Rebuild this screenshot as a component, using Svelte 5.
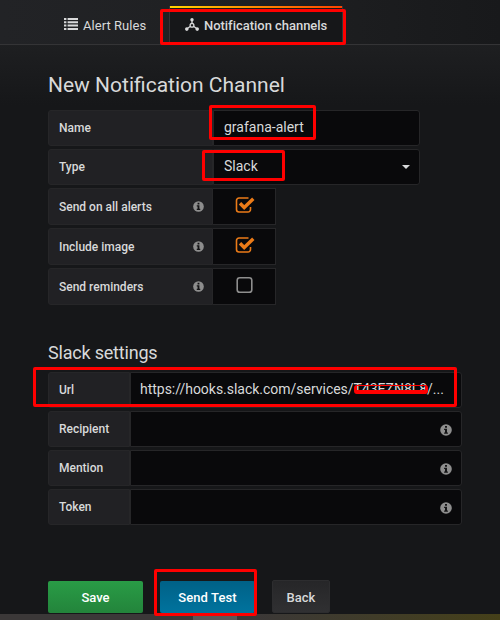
<script>
  const switches = [
    { label: 'Send on all alerts', on: true },
    { label: 'Include image', on: true },
    { label: 'Send reminders', on: false }
  ];
  const fields = ['Recipient', 'Mention', 'Token'];
</script>

{#snippet info()}
  <svg class="info" viewBox="0 0 12 12"><circle cx="6" cy="6" r="5.8" fill="currentColor" /><path d="M5 2h2v1.7H5zM4.1 4.7H7v3.7h.9v1.4H4.1V8.4H5V6.1h-.9z" fill="#141416" /></svg>
{/snippet}

<div class="page">
  <nav>
    <div class="tab first">
      <svg width="14" height="12" viewBox="0 0 14 12" fill="currentColor"><path d="M0 0h2.4v2H0zM0 3.3h2.4v2H0zM0 6.6h2.4v2H0zM0 9.9h2.4v2H0zM3.6 0H14v2H3.6zM3.6 3.3H14v2H3.6zM3.6 6.6H14v2H3.6zM3.6 9.9H14v2H3.6z" /></svg>
      <span>Alert Rules</span>
    </div>
    <div class="tab active">
      <svg width="14" height="13" viewBox="0 0 14 13"><path d="M7 2v4.2M5.8 8 2 10.8M8.2 8l3.8 2.8" fill="none" stroke="currentColor" stroke-width="1.3" /><circle cx="7" cy="7.3" r="1.9" fill="none" stroke="currentColor" stroke-width="1.3" /><g fill="currentColor"><circle cx="7" cy="1.7" r="1.7" /><circle cx="1.8" cy="11.1" r="1.8" /><circle cx="12.2" cy="11.1" r="1.8" /></g></svg>
      <span>Notification channels</span>
      <i class="mark m-tab"></i>
    </div>
  </nav>

  <main>
    <h1>New Notification Channel</h1>
    <div class="row">
      <div class="label">Name</div>
      <div class="input name"><span>grafana-alert</span></div>
      <i class="mark m-name"></i>
    </div>
    <div class="row">
      <div class="label">Type</div>
      <div class="input select"><span>Slack</span><b class="caret"></b></div>
      <i class="mark m-type"></i>
    </div>
    {#each switches as s}
      <div class="row sw">
        <div class="label"><span>{s.label}</span>{@render info()}</div>
        <div class="box">
          {#if s.on}
            <svg width="20" height="18" viewBox="0 0 20 18" fill="none"><path d="M13.5 2H4a2.5 2.5 0 0 0-2.5 2.5v9A2.5 2.5 0 0 0 4 16h9a2.5 2.5 0 0 0 2.5-2.5V11" stroke="#eb7b18" stroke-width="1.6" /><path d="m5 7.3 4.2 4.2L18.3 2.8" stroke="#eb7b18" stroke-width="3.4" /></svg>
          {:else}
            <svg width="20" height="18" viewBox="0 0 20 18" fill="none"><rect x="2.2" y="1.7" width="14.6" height="14.6" rx="2.6" stroke="#8e8e8e" stroke-width="1.6" /></svg>
          {/if}
        </div>
      </div>
    {/each}

    <h2>Slack settings</h2>
    <div class="row wide">
      <div class="label">Url</div>
      <div class="input url"><span>https://hooks.slack.com/services/T43EZN8L8/...</span></div>
      <i class="mark m-url"></i><i class="strike"></i>
    </div>
    {#each fields as f}
      <div class="row wide">
        <div class="label">{f}</div>
        <div class="input">{@render info()}</div>
      </div>
    {/each}

    <div class="buttons">
      <button class="save">Save</button>
      <button class="send">Send Test<i class="mark m-send"></i></button>
      <button class="back">Back</button>
    </div>
  </main>
  <footer><i></i></footer>
</div>

<style>
  :global(body) { margin: 0; background: #161719; }
  * { box-sizing: border-box; }
  .page { width: 500px; height: 620px; display: flex; flex-direction: column; overflow: hidden; background: linear-gradient(#1e1f21 44px, #161719 105px); color: #d8d9da; font: 14px Roboto, sans-serif; }
  nav { height: 45px; flex: none; display: flex; align-items: flex-end; padding-left: 48px; border-bottom: 1px solid #343436; background: linear-gradient(90deg, #222326, #1f2022 50%, #18191b); }
  .tab { position: relative; height: 38px; display: flex; align-items: center; gap: 5px; padding: 0 16px; font-size: 13px; font-weight: 500; white-space: nowrap; }
  .tab.first { width: 121px; font-weight: 400; letter-spacing: 0.05px; }
  .tab svg { flex: none; position: relative; top: -1px; }
  .active { width: 174px; height: 39px; margin-bottom: -1px; border: 1px solid #343436; border-width: 0 1px; background: #161719; padding-left: 15px; letter-spacing: -0.03px; }
  .active::before { content: ''; position: absolute; left: 0; right: 0; top: 0; height: 2px; background: linear-gradient(90deg, #ffd500, #ff8a00 50%, #ff4400); }
  .mark { position: absolute; border: 3px solid #f00; border-radius: 2px; z-index: 2; }
  .m-tab { left: -10px; top: 3px; width: 186px; height: 36px; }
  .m-name { left: 161px; top: -5px; width: 107px; height: 35px; }
  .m-type { left: 154px; top: 1px; width: 83px; height: 31px; }
  .m-url { left: -15px; top: -5px; width: 424px; height: 40px; }
  .m-send { left: -6px; top: -12px; width: 103px; height: 47px; }
  .strike { position: absolute; left: 306px; top: 13px; width: 74px; height: 9px; border: solid #f00; border-width: 1px 3px 4px; border-radius: 3px; }
  main { flex: 1; padding-left: 48px; min-height: 0; }
  h1, h2 { margin: 0; font-weight: 400; white-space: nowrap; display: flex; align-items: center; }
  h1 { height: 65px; font-size: 21px; padding-top: 15px; }
  h2 { height: 64px; font-size: 18px; padding-top: 25px; letter-spacing: -0.2px; }
  .row { position: relative; display: flex; width: 372px; height: 36px; margin-bottom: 3px; }
  .row.wide { width: 414px; }
  .label { width: 165px; flex: none; display: flex; align-items: center; justify-content: space-between; padding: 0 8px 0 10px; border: 1px solid #262628; background: #212124; border-radius: 3px 0 0 3px; font-size: 12px; font-weight: 500; white-space: nowrap; }
  .wide .label { width: 82px; padding-bottom: 1px; }
  .input { flex: 1; min-width: 0; display: flex; align-items: center; border: 1px solid #262628; background: #09090b; border-radius: 0 3px 3px 0; padding: 0 10px; white-space: nowrap; }
  .name { padding-bottom: 2px; }
  .select { padding: 0 9px 2px 10px; }
  .wide .input { padding: 2px 9px 0; }
  .wide .url { padding: 0 9px 2px; letter-spacing: -0.02px; }
  .caret { margin: 2px 0 0 auto; border: 4px solid transparent; border-top-color: #d8d9da; border-bottom: 0; }
  .info { width: 11px; height: 11px; color: #8e8e8e; flex: none; }
  .input .info { margin-left: auto; width: 12px; height: 12px; }
  .sw { width: 228px; height: 37px; }
  .box { flex: 1; display: flex; align-items: center; justify-content: center; padding: 0 0 4px 2px; border: 1px solid #262628; background: #09090b; border-left: 0; }
  .buttons { display: flex; height: 33px; margin-top: 55px; align-items: flex-end; }
  button { position: relative; border: 0; padding: 0; height: 32px; border-radius: 2px; color: #fff; font: 500 13px Roboto, sans-serif; }
  .save { width: 95px; background: linear-gradient(#299c46, #23843b); }
  .send { width: 95px; margin: 0 17px; letter-spacing: 0.1px; background: linear-gradient(#006187, #00739e); }
  .back { width: 58px; height: 33px; padding-top: 2px; color: #d8d9da; background: linear-gradient(#262628, #303032); border: 1px solid #2d2d2f; }
  footer { height: 6px; flex: none; background: linear-gradient(90deg, #3b3838 0 50%, #454019 100%); padding-left: 193px; }
  footer i { display: block; width: 44px; height: 6px; background: #5b5858; }
</style>
